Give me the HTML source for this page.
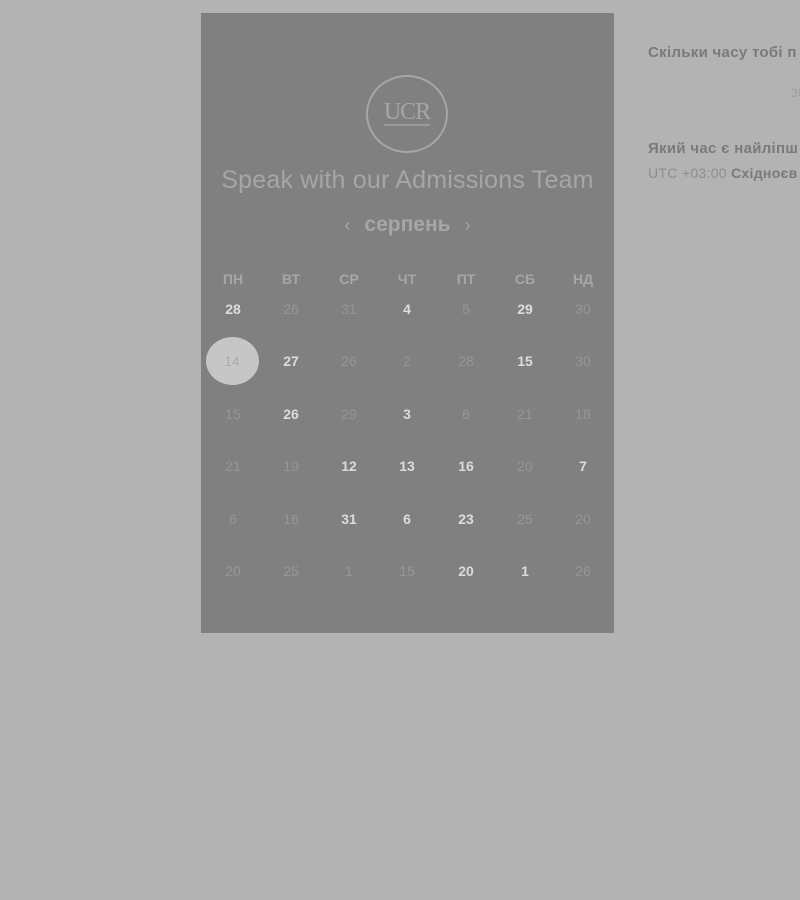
<!DOCTYPE html>
<html><head><meta charset="utf-8"><style>
body{margin:0;width:800px;height:900px;background:#b3b3b3;font-family:"Liberation Sans",sans-serif;position:relative;overflow:hidden}
.panel{position:absolute;left:201px;top:13px;width:413px;height:620px;background:#808080}
.logo{position:absolute;left:366px;top:75px;width:78px;height:74px;border:2.5px solid #a6a6a6;border-radius:50%;color:#a6a6a6;font-family:"Liberation Serif",serif;font-size:24px;text-align:center;line-height:70px;box-sizing:content-box;letter-spacing:-1px}
.logo i{position:absolute;left:16px;right:16px;top:47px;height:2px;background:#9a9a9a}
.title{position:absolute;left:201px;width:413px;top:166px;text-align:center;color:#a6a6a6;font-size:25px;letter-spacing:0.2px}
.month{position:absolute;left:201px;width:413px;top:213px;text-align:center;color:#a6a6a6;font-size:21px;font-weight:bold}
.c{position:absolute;width:50px;margin-left:-25px;text-align:center;font-size:14px;font-weight:bold}
.h{color:#a6a6a6}.d{color:#969696;font-weight:normal}.b{color:#dcdcdc}
.circ{position:absolute;left:206px;top:337px;width:53px;height:48px;border-radius:50%;background:#c6c6c6}
.r{position:absolute;color:#7a7a7a;font-size:15px;font-weight:bold;white-space:nowrap;letter-spacing:0.3px}
</style></head><body>
<div class="panel"></div>
<div class="logo">UCR<i></i></div>
<div class="title">Speak with our Admissions Team</div>
<div class="month"><span style="font-weight:normal;font-size:18px;margin-right:14px">‹</span>серпень<span style="font-weight:normal;font-size:18px;margin-left:14px">›</span></div>
<div class="circ"></div>
<div id="g"></div>
<div class="r" style="left:648px;top:44px">Скільки часу тобі п</div>
<div class="r" style="left:791px;top:86px;font-size:12px;color:#999;font-weight:normal">30</div>
<div class="r" style="left:648px;top:140px">Який час є найліпш</div>
<div class="r" style="left:648px;top:165px;font-size:14px;font-weight:normal;color:#8e8e8e">UTC +03:00 <b style="color:#7a7a7a">Східноєв</b></div>
<script>
var xs=[233,291,349,407,466,525,583],ys=[309,361,414,466,519,571];
var h=["ПН","ВТ","СР","ЧТ","ПТ","СБ","НД"];
var rows=[["28b","26","31","4b","5","29b","30"],["14","27b","26","2","28","15b","30"],["15","26b","29","3b","6","21","18"],["21","19","12b","13b","16b","20","7b"],["6","16","31b","6b","23b","25","20"],["20","25","1","15","20b","1b","26"]];
var s="";h.forEach((t,i)=>s+=`<div class="c h" style="left:${xs[i]}px;top:271px">${t}</div>`);
rows.forEach((r,j)=>r.forEach((t,i)=>{var b=t.endsWith("b");t=t.replace("b","");s+=`<div class="c ${b?"b":"d"}" style="left:${xs[i]-(j==1&&i==0?1:0)}px;top:${ys[j]-8}px;${j==1&&i==0?"color:#ababab":""}">${t}</div>`}));
document.getElementById("g").innerHTML=s;
</script>
</body></html>
